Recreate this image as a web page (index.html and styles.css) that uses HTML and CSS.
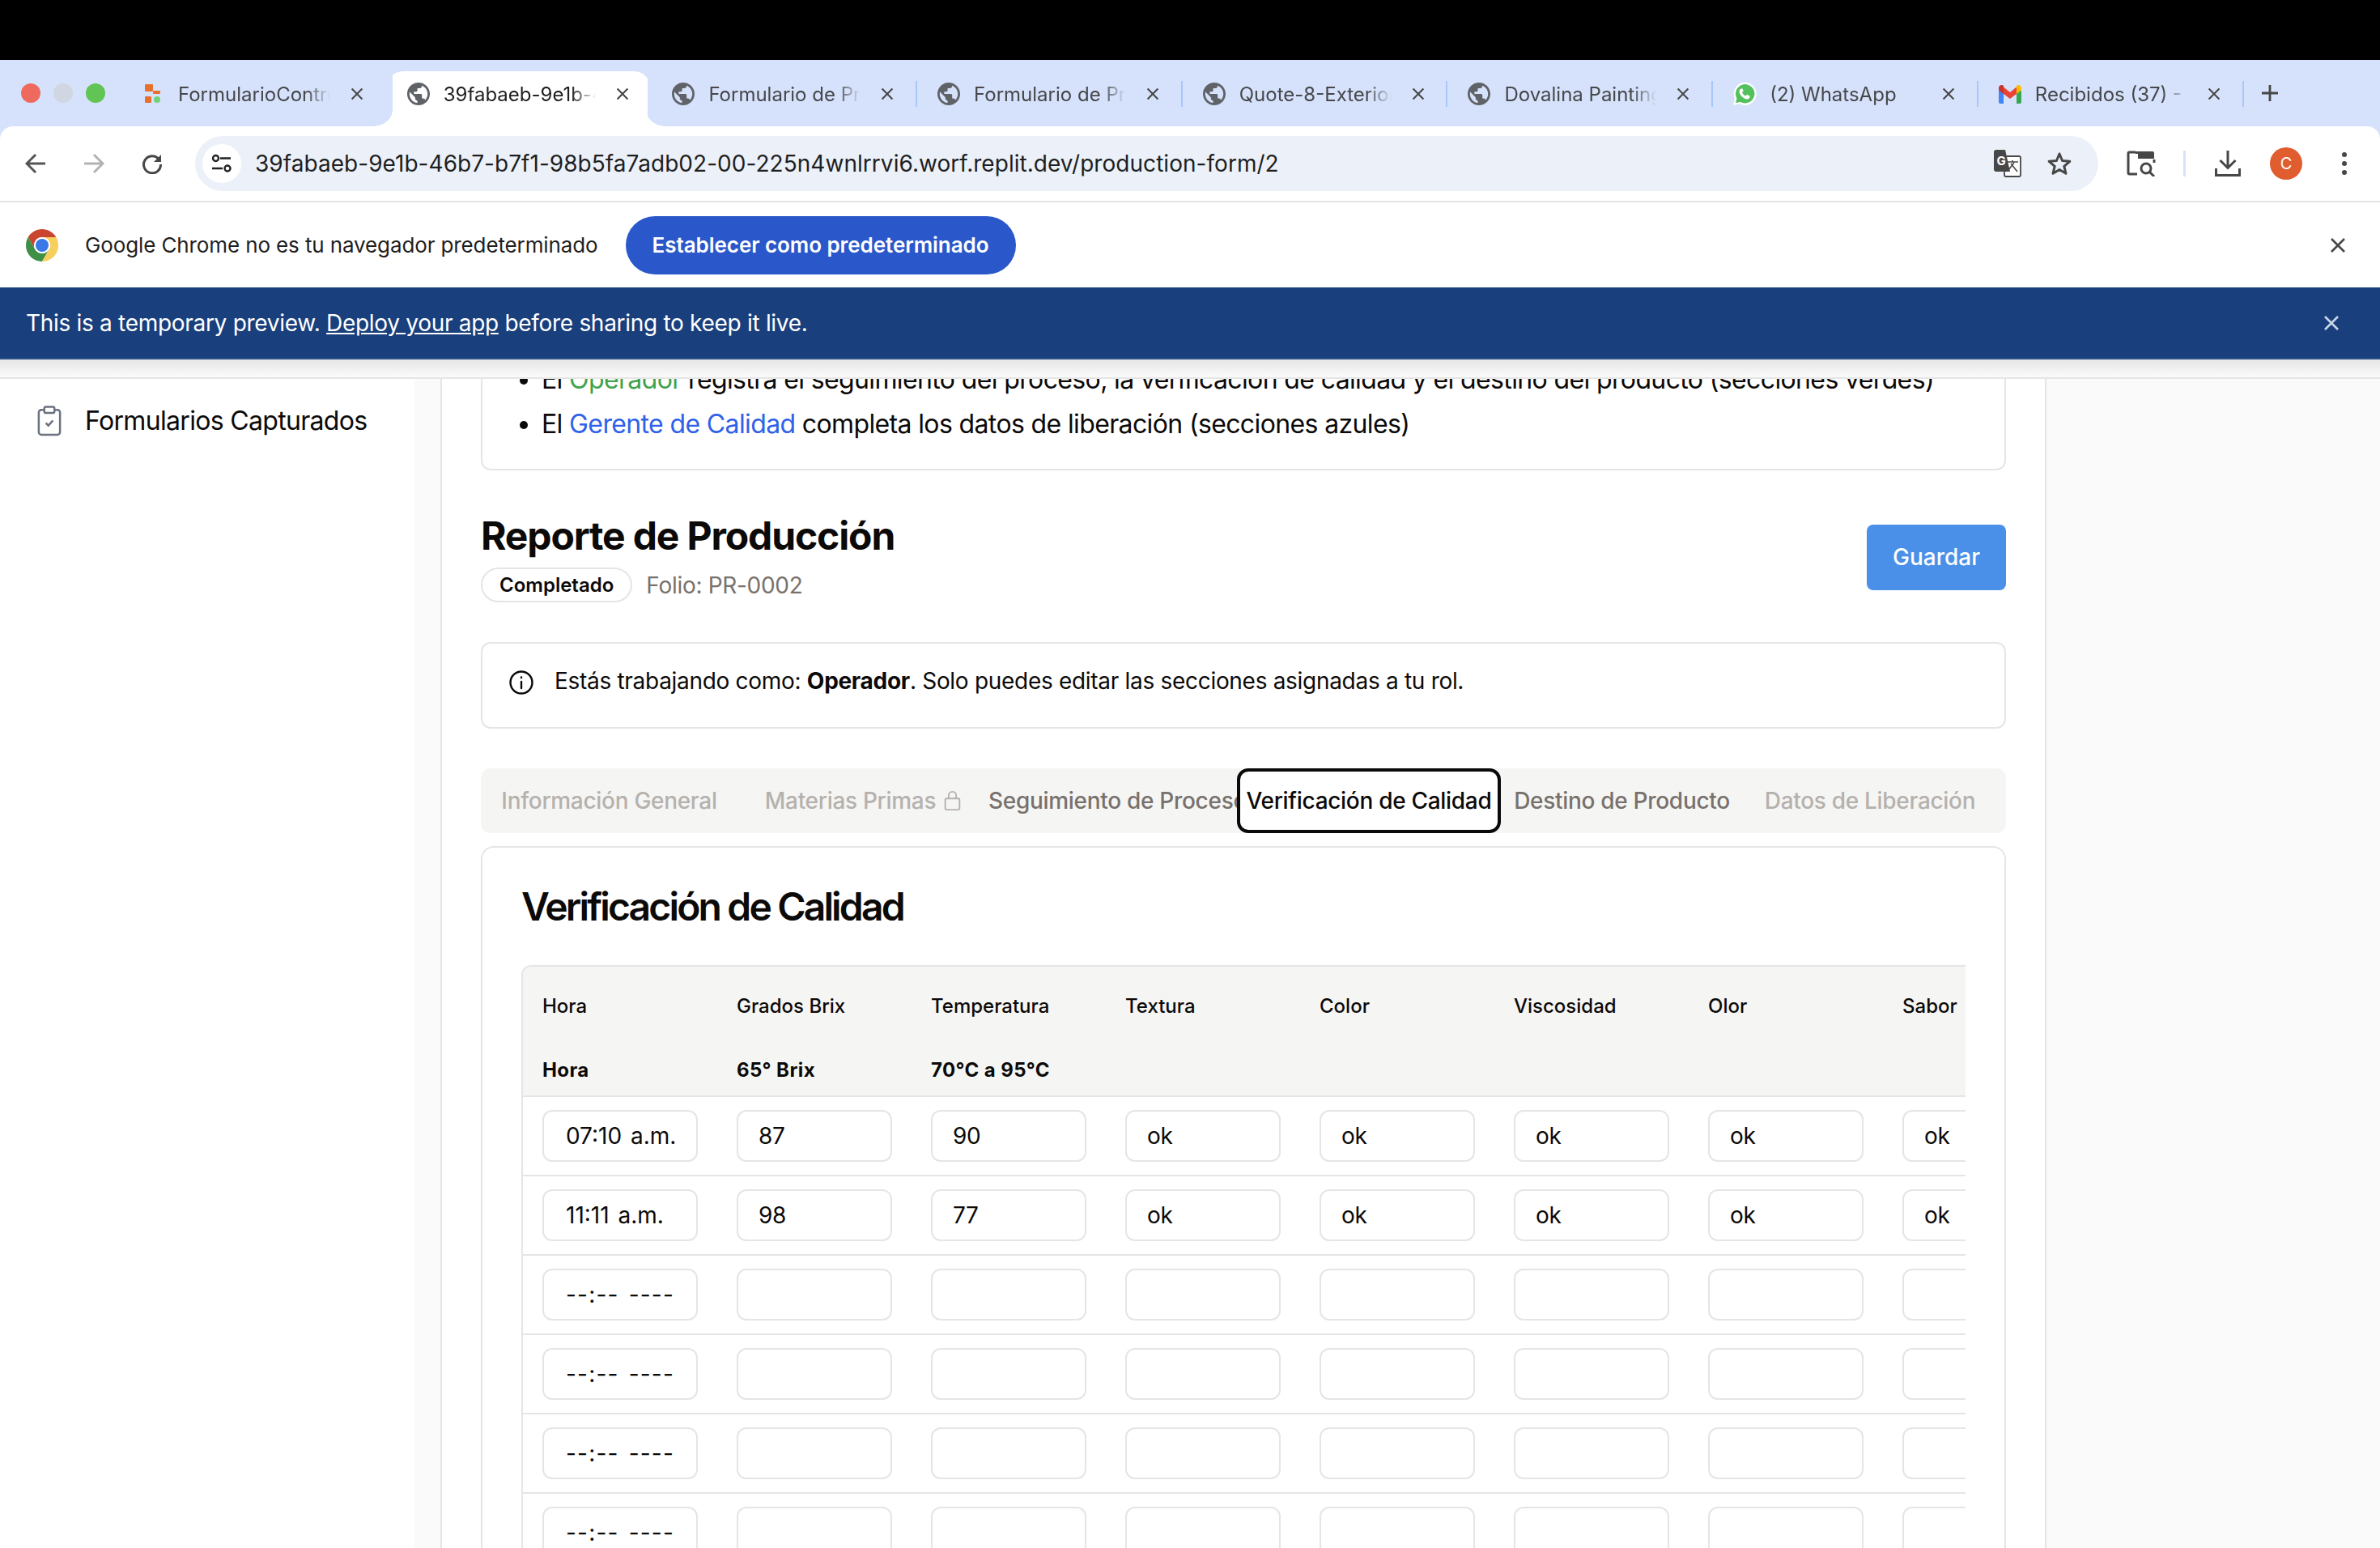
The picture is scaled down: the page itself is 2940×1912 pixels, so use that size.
FILE: index.html
```html
<!DOCTYPE html>
<html lang="es">
  <head>
    <meta charset="UTF-8" />
    <title>Reporte de Producción</title>
    <link rel="stylesheet" href="styles.css">
  </head>
  <body>
    <svg class="defs" width="0" height="0">
      <symbol id="globe" viewBox="2 2 20 20">
        <path d="M12 2C6.48 2 2 6.48 2 12s4.48 10 10 10 10-4.48 10-10S17.52 2 12 2zm-1 17.93c-3.95-.49-7-3.85-7-7.93 0-.62.08-1.21.21-1.79L9 15v1c0 1.1.9 2 2 2v1.93zm6.9-2.54c-.26-.81-1-1.39-1.9-1.39h-1v-3c0-.55-.45-1-1-1H8v-2h2c.55 0 1-.45 1-1V7h2c1.1 0 2-.9 2-2v-.41c2.93 1.19 5 4.06 5 7.41 0 2.08-.8 3.97-2.1 5.39z" fill="#5f6368" />
      </symbol>
      <symbol id="close" viewBox="0 0 20 20">
        <path d="M2 2L18 18M18 2L2 18" fill="none" stroke="currentColor" stroke-width="2.6" />
      </symbol>
    </svg>

    <div class="chrome">
      <div class="tabstrip">
        <div class="lights">
          <span class="light red"></span>
          <span class="light grey"></span>
          <span class="light green"></span>
        </div>
        <div class="tab">
          <svg class="favicon" viewBox="0 0 28 28">
            <rect x="4" y="2" width="10" height="9" rx="1" fill="#e8702f" />
            <rect x="14" y="10" width="9" height="4" rx="1" fill="#e8702f" />
            <rect x="4" y="17" width="8" height="8" rx="1" fill="#e8702f" />
            <circle cx="19" cy="21" r="4" fill="#6fd17a" />
          </svg>
          <span class="tab-title">FormularioControl</span>
          <svg class="tab-close"><use href="#close" /></svg>
        </div>
        <span class="tab-sep hidden"></span>
        <div class="tab active">
          <span class="flare left"></span>
          <svg class="favicon"><use href="#globe" /></svg>
          <span class="tab-title">39fabaeb-9e1b-46b7</span>
          <svg class="tab-close"><use href="#close" /></svg>
          <span class="flare right"></span>
        </div>
        <span class="tab-sep hidden"></span>
        <div class="tab">
          <svg class="favicon"><use href="#globe" /></svg>
          <span class="tab-title">Formulario de Producción</span>
          <svg class="tab-close"><use href="#close" /></svg>
        </div>
        <span class="tab-sep"></span>
        <div class="tab">
          <svg class="favicon"><use href="#globe" /></svg>
          <span class="tab-title">Formulario de Producción</span>
          <svg class="tab-close"><use href="#close" /></svg>
        </div>
        <span class="tab-sep"></span>
        <div class="tab">
          <svg class="favicon"><use href="#globe" /></svg>
          <span class="tab-title">Quote-8-Exterior</span>
          <svg class="tab-close"><use href="#close" /></svg>
        </div>
        <span class="tab-sep"></span>
        <div class="tab">
          <svg class="favicon"><use href="#globe" /></svg>
          <span class="tab-title">Dovalina Painting</span>
          <svg class="tab-close"><use href="#close" /></svg>
        </div>
        <span class="tab-sep"></span>
        <div class="tab">
          <svg class="favicon wa" viewBox="0 0 30 30">
            <path d="M1 29l2-8A14 14 0 1 1 8.500 27z" fill="#fff" />
            <path d="M4 26l1.500-5.500A11.700 11.700 0 1 1 10 25z" fill="#52c05c" />
            <path d="M11 8.500c-1 0-2.500 1.500-2.500 3.500 0 4 5.500 9.500 9.500 9.500 2 0 3.500-1.500 3.500-2.500v-1.500l-3.500-1.700-1.500 1.700c-2-.7-3.800-2.500-4.500-4.500l1.700-1.500L12.500 8.500z" fill="#fff" />
          </svg>
          <span class="tab-title">(2) WhatsApp</span>
          <svg class="tab-close"><use href="#close" /></svg>
        </div>
        <span class="tab-sep"></span>
        <div class="tab">
          <svg class="favicon" viewBox="0 0 28 24">
            <path d="M0 8h6v16H2a2 2 0 0 1-2-2z" fill="#4285f4" />
            <path d="M22 8h6v14a2 2 0 0 1-2 2h-4z" fill="#34a853" />
            <path d="M6 3.500L14 10l8-6.500V12l-8 6-8-6z" fill="#ea4335" />
            <path d="M0 4.500C0 1 4 0 6 1.800V12L0 7.500z" fill="#c5352b" />
            <path d="M22 1.800C24 0 28 1 28 4.500v3L22 12z" fill="#fbbc04" />
          </svg>
          <span class="tab-title">Recibidos (37) - correo</span>
          <svg class="tab-close"><use href="#close" /></svg>
        </div>
        <span class="tab-sep"></span>
        <svg class="new-tab" viewBox="0 0 22 22">
          <path d="M11 1V21M1 11H21" fill="none" stroke="#474747" stroke-width="2.800" />
        </svg>
      </div>

      <div class="toolbar">
        <span class="nav-btn">
          <svg class="icon-arrow" viewBox="0 0 26 26"><path d="M25 13H3M13 2L2 13L13 24" fill="none" stroke="#555" stroke-width="3" /></svg>
        </span>
        <span class="nav-btn">
          <svg class="icon-arrow" viewBox="0 0 26 26"><path d="M1 13H23M13 2L24 13L13 24" fill="none" stroke="#b3b3b3" stroke-width="3" /></svg>
        </span>
        <span class="nav-btn">
          <svg class="icon-arrow" viewBox="0 0 26 26">
            <path d="M21 7.500A10.500 10.500 0 1 0 23.500 14" fill="none" stroke="#474747" stroke-width="3" />
            <path d="M24 2v9h-9z" fill="#474747" />
          </svg>
        </span>
        <div class="omnibox">
          <span class="site-info">
            <svg viewBox="0 0 26 24" width="26" height="24">
              <circle cx="5.500" cy="5.500" r="3.500" fill="none" stroke="#222" stroke-width="2.400" />
              <path d="M11 5.500H24M1 18H14" stroke="#222" stroke-width="2.400" />
              <circle cx="20" cy="18" r="3.500" fill="none" stroke="#222" stroke-width="2.400" />
            </svg>
          </span>
          <span class="url">39fabaeb-9e1b-46b7-b7f1-98b5fa7adb02-00-225n4wnlrrvi6.worf.replit.dev/production-form/2</span>
          <span class="omni-btn">
            <svg viewBox="0 0 34 34" width="34" height="34">
              <rect x="13" y="8" width="20" height="25" rx="2" fill="#fff" stroke="#474747" stroke-width="1.800" />
              <path d="M16 15h14M23 13v2M18 25l7-9M21 17l8 10" fill="none" stroke="#474747" stroke-width="1.600" />
              <path d="M3 0h11l6 27H3a3 3 0 0 1-3-3V3a3 3 0 0 1 3-3z" fill="#474747" />
              <text class="translate-g" x="3.500" y="19">G</text>
            </svg>
          </span>
          <span class="omni-btn">
            <svg viewBox="0 0 30 30" width="30" height="30">
              <path d="M15 3l3.600 8.500 9.200.8-7 6 2.200 9L15 22.500 7 27.300l2.200-9-7-6 9.200-.8z" fill="none" stroke="#474747" stroke-width="3" stroke-linejoin="round" />
            </svg>
          </span>
        </div>
        <div class="toolbar-right">
          <span class="nav-btn side-btn">
            <svg viewBox="0 0 36 32" width="36" height="32">
              <path d="M11 2H3.500A1.500 1.500 0 0 0 2 3.500v24A1.500 1.500 0 0 0 3.500 29H13" fill="none" stroke="#474747" stroke-width="3" />
              <path d="M14 1h18a2 2 0 0 1 2 2v7H14zM11 1h3v3h-3z" fill="#474747" />
              <path d="M34 11v4" stroke="#474747" stroke-width="3" />
              <circle cx="24" cy="22" r="6" fill="none" stroke="#474747" stroke-width="3" />
              <path d="M28 26l6 6" stroke="#474747" stroke-width="3" />
            </svg>
          </span>
          <span class="toolbar-div"></span>
          <span class="nav-btn download-btn">
            <svg viewBox="0 0 32 32" width="32" height="32">
              <path d="M16 0V21M6.500 12L16 21.500 25.500 12M1.500 22v8.500h29V22" fill="none" stroke="#474747" stroke-width="3" />
            </svg>
          </span>
          <span class="nav-btn"><span class="avatar">C</span></span>
          <span class="nav-btn">
            <svg viewBox="0 0 8 28" width="8" height="28">
              <circle cx="4" cy="3" r="3" fill="#474747" /><circle cx="4" cy="14" r="3" fill="#474747" /><circle cx="4" cy="25" r="3" fill="#474747" />
            </svg>
          </span>
        </div>
      </div>

      <div class="infobar">
        <svg class="chrome-logo" viewBox="0 0 40 40">
          <path d="M2.680 10A20 20 0 0 1 37.320 10H20A10 10 0 0 0 11.340 25z" fill="#c9452f" />
          <path d="M2.680 10L11.340 25A10 10 0 0 0 28.660 25L20 40A20 20 0 0 1 2.680 10z" fill="#3f8f47" />
          <path d="M37.320 10A20 20 0 0 1 20 40L28.660 25A10 10 0 0 0 20 10z" fill="#f6cf5c" />
          <circle cx="20" cy="20" r="10" fill="#fff" />
          <circle cx="20" cy="20" r="8" fill="#3b78e7" />
        </svg>
        <span class="infobar-text">Google Chrome no es tu navegador predeterminado</span>
        <span class="infobar-btn">Establecer como predeterminado</span>
        <svg class="infobar-close"><use href="#close" /></svg>
      </div>
    </div>

    <div class="preview-banner">
      <span>This is a temporary preview. <u>Deploy your app</u> before sharing to keep it live.</span>
      <svg class="banner-close"><use href="#close" /></svg>
    </div>
    <div class="app-header"></div>

    <div class="app">
      <aside class="sidebar">
        <div class="side-item">
          <svg viewBox="0 0 24 30" width="30" height="38">
            <rect x="1.500" y="4" width="21" height="24.500" rx="2.500" fill="none" stroke="#6b7280" stroke-width="2" />
            <rect x="7" y="1" width="10" height="6" rx="1.500" fill="#fff" stroke="#6b7280" stroke-width="2" />
            <path d="M8.500 17l2.500 2.500 4.500-5" fill="none" stroke="#6b7280" stroke-width="2" />
          </svg>
          <span>Formularios Capturados</span>
        </div>
      </aside>

      <main class="main">
        <div class="panel">
          <div class="notice">
            <ul>
              <li>El <span class="green">Operador</span> registra el seguimiento del proceso, la verificación de calidad y el destino del producto (secciones verdes)</li>
              <li>El <span class="blue">Gerente de Calidad</span> completa los datos de liberación (secciones azules)</li>
            </ul>
          </div>

          <div class="title-row">
            <div>
              <h1>Reporte de Producción</h1>
              <div class="meta">
                <span class="badge">Completado</span>
                <span class="folio">Folio: PR-0002</span>
              </div>
            </div>
            <span class="save-btn">Guardar</span>
          </div>

          <div class="alert">
            <svg viewBox="0 0 30 30" width="30" height="30">
              <circle cx="15" cy="15" r="13.500" fill="none" stroke="#0c0a09" stroke-width="2.400" />
              <path d="M15 14v8M15 8.500v.5" fill="none" stroke="#0c0a09" stroke-width="2.400" stroke-linecap="round" />
            </svg>
            <span>Estás trabajando como: <b>Operador</b>. Solo puedes editar las secciones asignadas a tu rol.</span>
          </div>

          <div class="tabs">
            <span class="form-tab off">Información General</span>
            <span class="form-tab off">Materias Primas
              <svg viewBox="0 0 22 28" width="21" height="26">
                <rect x="1.500" y="11" width="19" height="15" rx="2" fill="none" stroke="#b5b1ad" stroke-width="2" />
                <path d="M6 11V7a5 5 0 0 1 10 0v4" fill="none" stroke="#b5b1ad" stroke-width="2" />
              </svg>
            </span>
            <span class="form-tab clipped">Seguimiento de Proceso</span>
            <span class="form-tab current">Verificación de Calidad</span>
            <span class="form-tab">Destino de Producto</span>
            <span class="form-tab off">Datos de Liberación</span>
          </div>

          <section class="card">
            <h2>Verificación de Calidad</h2>
            <div class="table-wrap">
              <table>
                <thead>
                  <tr class="head-names">
                    <th>Hora</th><th>Grados Brix</th><th>Temperatura</th><th>Textura</th><th>Color</th><th>Viscosidad</th><th>Olor</th><th>Sabor</th>
                  </tr>
                  <tr class="head-specs">
                    <th>Hora</th><th>65° Brix</th><th>70°C a 95°C</th><th></th><th></th><th></th><th></th><th></th>
                  </tr>
                </thead>
                <tbody>
                  <tr>
                    <td><div class="field time">07:10 a.m.</div></td><td><div class="field">87</div></td><td><div class="field">90</div></td><td><div class="field">ok</div></td><td><div class="field">ok</div></td><td><div class="field">ok</div></td><td><div class="field">ok</div></td><td><div class="field">ok</div></td>
                  </tr>
                  <tr>
                    <td><div class="field time">11:11 a.m.</div></td><td><div class="field">98</div></td><td><div class="field">77</div></td><td><div class="field">ok</div></td><td><div class="field">ok</div></td><td><div class="field">ok</div></td><td><div class="field">ok</div></td><td><div class="field">ok</div></td>
                  </tr>
                  <tr>
                    <td><div class="field time empty">--:-- ----</div></td><td><div class="field"></div></td><td><div class="field"></div></td><td><div class="field"></div></td><td><div class="field"></div></td><td><div class="field"></div></td><td><div class="field"></div></td><td><div class="field"></div></td>
                  </tr>
                  <tr>
                    <td><div class="field time empty">--:-- ----</div></td><td><div class="field"></div></td><td><div class="field"></div></td><td><div class="field"></div></td><td><div class="field"></div></td><td><div class="field"></div></td><td><div class="field"></div></td><td><div class="field"></div></td>
                  </tr>
                  <tr>
                    <td><div class="field time empty">--:-- ----</div></td><td><div class="field"></div></td><td><div class="field"></div></td><td><div class="field"></div></td><td><div class="field"></div></td><td><div class="field"></div></td><td><div class="field"></div></td><td><div class="field"></div></td>
                  </tr>
                  <tr>
                    <td><div class="field time empty">--:-- ----</div></td><td><div class="field"></div></td><td><div class="field"></div></td><td><div class="field"></div></td><td><div class="field"></div></td><td><div class="field"></div></td><td><div class="field"></div></td><td><div class="field"></div></td>
                  </tr>
                </tbody>
              </table>
            </div>
          </section>
        </div>
      </main>
    </div>
  </body>
</html>
```

FILE: styles.css
```css
html,
body {
  margin: 0;
  height: 100%;
}

body {
  display: flex;
  flex-direction: column;
  height: 1912px;
  overflow: hidden;
  background: #fff;
  color: #0c0a09;
  font-family: Inter, "Liberation Sans", sans-serif;
  font-size: 28px;
  letter-spacing: -0.3px;
  border-top: 74px solid #000;
  box-sizing: border-box;
}

.defs {
  position: absolute;
}

/* browser chrome */
.chrome {
  background: #d6e2fb;
  flex: none;
  letter-spacing: 0;
}

.tabstrip {
  display: flex;
  align-items: flex-end;
  height: 82px;
}

.lights {
  display: flex;
  gap: 16px;
  width: 150px;
  height: 68px;
  box-sizing: border-box;
  padding: 15px 0 0 26px;
}

.light {
  width: 24px;
  height: 24px;
  border-radius: 50%;
}

.light.red { background: #ee6a5f; }
.light.grey { background: #d0d6e2; }
.light.green { background: #61c454; }

.tab {
  position: relative;
  display: flex;
  align-items: center;
  width: 325.7px;
  height: 68px;
  box-sizing: border-box;
  padding: 0 0 12px 25px;
  color: #45474a;
  font-size: 24px;
}

.tab.active {
  background: linear-gradient(#fff, #fff) 7px 0 / 315px 100% no-repeat;
  border-radius: 20px 20px 0 0;
  color: #1f1f1f;
}

.flare {
  position: absolute;
  bottom: 0;
  width: 24px;
  height: 20px;
}

.flare.left {
  left: -17px;
  background: radial-gradient(ellipse 24px 20px at 0 0, transparent 98%, #fff 100%);
}

.flare.right {
  right: -19px;
  background: radial-gradient(ellipse 24px 20px at 100% 0, transparent 98%, #fff 100%);
}

.favicon {
  flex: none;
  width: 28px;
  height: 28px;
}

.favicon.wa {
  width: 30px;
  height: 32px;
  margin: 0 -1px;
}

.tab-title {
  width: 188px;
  margin-left: 17px;
  white-space: nowrap;
  overflow: hidden;
  -webkit-mask-image: linear-gradient(to right, #000 84%, transparent 100%);
  mask-image: linear-gradient(to right, #000 84%, transparent 100%);
}

.tab-close {
  flex: none;
  width: 16px;
  height: 16px;
  margin-left: 25px;
  color: #474747;
}

.tab-sep {
  flex: none;
  width: 2px;
  height: 32px;
  margin-bottom: 24px;
  background: #a8c7fa;
}

.tab-sep.hidden {
  background: none;
}

.new-tab {
  width: 22px;
  height: 22px;
  margin: 0 0 30px 21px;
}

.toolbar {
  display: flex;
  align-items: center;
  height: 92px;
  padding-left: 8px;
  background: #fff;
  border-radius: 16px 16px 0 0;
  border-bottom: 2px solid #e3e3e3;
}

.nav-btn {
  display: flex;
  align-items: center;
  justify-content: center;
  flex: none;
  width: 72px;
}

.icon-arrow {
  width: 26px;
  height: 26px;
}

.omnibox {
  display: flex;
  align-items: center;
  flex: 1;
  height: 68px;
  margin-left: 17px;
  padding: 0 16px 0 9px;
  background: #ecf1f9;
  border-radius: 34px;
}

.site-info {
  display: flex;
  align-items: center;
  justify-content: center;
  width: 48px;
  height: 48px;
  background: #fff;
  border-radius: 50%;
}

.url {
  flex: 1;
  margin-left: 17px;
  font-size: 28px;
  letter-spacing: 0.04px;
  color: #1f1f1f;
  white-space: nowrap;
}

.omni-btn {
  display: flex;
  align-items: center;
  justify-content: center;
  width: 64px;
}

.translate-g {
  fill: #fff;
  font-family: Inter, sans-serif;
  font-size: 15px;
  font-weight: 700;
}

.toolbar-right {
  display: flex;
  align-items: center;
  flex: none;
  width: 348px;
}

.side-btn {
  margin-left: 17px;
}

.toolbar-div {
  width: 3px;
  height: 32px;
  margin-left: 16px;
  background: #d3e3fd;
}

.download-btn {
  margin-left: 16px;
}

.avatar {
  display: flex;
  align-items: center;
  justify-content: center;
  width: 40px;
  height: 40px;
  border-radius: 50%;
  background: #e05d2f;
  color: #fff;
  font-size: 20px;
}

.infobar {
  display: flex;
  align-items: center;
  height: 105px;
  padding: 0 42px 0 32px;
  background: #fff;
}

.chrome-logo {
  width: 40px;
  height: 40px;
}

.infobar-text {
  margin-left: 33px;
  font-size: 26px;
  letter-spacing: -0.12px;
  color: #1f1f1f;
}

.infobar-btn {
  display: flex;
  align-items: center;
  justify-content: center;
  width: 482px;
  height: 72px;
  margin-left: 34px;
  border-radius: 36px;
  background: #2a57c9;
  color: #fff;
  font-size: 26px;
  font-weight: 600;
  letter-spacing: -0.06px;
}

.infobar-close {
  width: 20px;
  height: 20px;
  margin-left: auto;
  color: #474747;
}

.preview-banner {
  display: flex;
  align-items: center;
  flex: none;
  height: 87px;
  padding: 0 50px 0 32px;
  background: #193f7c;
  border-bottom: 2px solid #2b4f87;
  color: #fff;
  font-size: 28px;
}

.banner-close {
  width: 20px;
  height: 20px;
  margin-left: auto;
  color: #c9d6ea;
}

.app-header {
  flex: none;
  height: 22px;
  background: linear-gradient(#e6e6e6, #fafafa);
  border-bottom: 2px solid #e5e5e5;
}

/* page */
.app {
  display: flex;
  flex: 1;
  min-height: 0;
}

.sidebar {
  flex: none;
  width: 512px;
  padding: 32px 0 0 46px;
  box-sizing: border-box;
  background: #fff;
}

.side-item {
  display: flex;
  align-items: center;
  gap: 29px;
  font-size: 32px;
  letter-spacing: -0.68px;
}

.main {
  flex: 1;
  min-width: 0;
  padding-left: 32px;
  background: #fafafa;
}

.panel {
  width: 1984px;
  height: 100%;
  box-sizing: border-box;
  padding: 0 48px;
  overflow: hidden;
  background: #fff;
  border-left: 2px solid #e5e5e5;
  border-right: 2px solid #e5e5e5;
}

.notice {
  margin-top: -55px;
  padding: 30px 30px 31px;
  border: 2px solid #e5e5e5;
  border-radius: 12px;
  font-size: 32px;
  letter-spacing: -0.63px;
}

.notice ul {
  margin: 0;
  padding-left: 43px;
}

.notice li {
  line-height: 48px;
  margin-bottom: 7px;
  white-space: nowrap;
}

.notice li:last-child {
  margin-bottom: 0;
}

.green { color: #3fa34d; }
.blue { color: #2f62e8; }

.title-row {
  display: flex;
  align-items: center;
  justify-content: space-between;
  margin-top: 51px;
}

h1 {
  margin: 0;
  font-size: 48px;
  line-height: 60px;
  font-weight: 700;
  letter-spacing: -1.13px;
}

.meta {
  display: flex;
  align-items: center;
  gap: 17px;
  margin-top: 9px;
}

.badge {
  display: flex;
  align-items: center;
  height: 43px;
  box-sizing: border-box;
  padding: 0 21px;
  border: 2px solid #e5e5e5;
  border-radius: 22px;
  font-size: 24px;
  font-weight: 600;
  letter-spacing: 0;
}

.folio {
  color: #78716c;
}

.save-btn {
  display: flex;
  align-items: center;
  justify-content: center;
  width: 172px;
  height: 81px;
  border-radius: 8px;
  background: #4a90e8;
  color: #fff;
  font-weight: 500;
  letter-spacing: 0;
}

.alert {
  display: flex;
  align-items: flex-start;
  gap: 26px;
  height: 107px;
  box-sizing: border-box;
  margin-top: 49px;
  padding: 33px 33px 0;
  border: 2px solid #e5e5e5;
  border-radius: 12px;
}

.alert span {
  margin-top: -2px;
  line-height: 30px;
}

.tabs {
  display: grid;
  grid-template-columns: 317px 310px 307px 326px 299px 314px;
  height: 80px;
  margin-top: 49px;
  padding-right: 11px;
  background: #f5f5f4;
  border-radius: 12px;
  color: #78716c;
  font-weight: 500;
}

.form-tab {
  display: flex;
  align-items: center;
  justify-content: center;
  gap: 10px;
  white-space: nowrap;
  overflow: hidden;
}

.form-tab.off {
  color: #b5b1ad;
}

.form-tab.clipped {
  justify-content: flex-start;
}

.form-tab.current {
  box-sizing: border-box;
  background: #fff;
  border: 4px solid #0a0a0a;
  border-radius: 14px;
  color: #0c0a09;
}

.card {
  margin-top: 16px;
  padding: 43px 0 0 48px;
  border: 2px solid #e5e5e5;
  border-bottom: 0;
  border-radius: 16px 16px 0 0;
}

h2 {
  margin: 0;
  font-size: 48px;
  line-height: 60px;
  font-weight: 600;
  letter-spacing: -2.85px;
}

.table-wrap {
  width: 1782px;
  margin-top: 42px;
  overflow: hidden;
  border-left: 2px solid #e5e5e5;
  border-top: 2px solid #e5e5e5;
  border-radius: 12px 0 0 0;
}

table {
  width: 1920px;
  table-layout: fixed;
  border-collapse: separate;
  border-spacing: 0;
}

th {
  padding: 0 24px;
  background: #f5f5f4;
  text-align: left;
  font-size: 24px;
  letter-spacing: 0;
}

.head-names th {
  height: 96px;
  font-weight: 500;
}

.head-specs th {
  height: 63px;
  font-weight: 700;
  letter-spacing: 0.4px;
  border-bottom: 2px solid #e5e5e5;
}

td {
  padding: 16px 24px;
  border-bottom: 2px solid #e5e5e5;
}

.field {
  display: flex;
  align-items: center;
  height: 64px;
  box-sizing: border-box;
  padding-left: 25px;
  border: 2px solid #e5e5e5;
  border-radius: 12px;
  background: #fff;
}

.field.time {
  padding-left: 27px;
  letter-spacing: 0;
  word-spacing: 3px;
  white-space: nowrap;
}

.field.time.empty {
  letter-spacing: 1.2px;
}
```
